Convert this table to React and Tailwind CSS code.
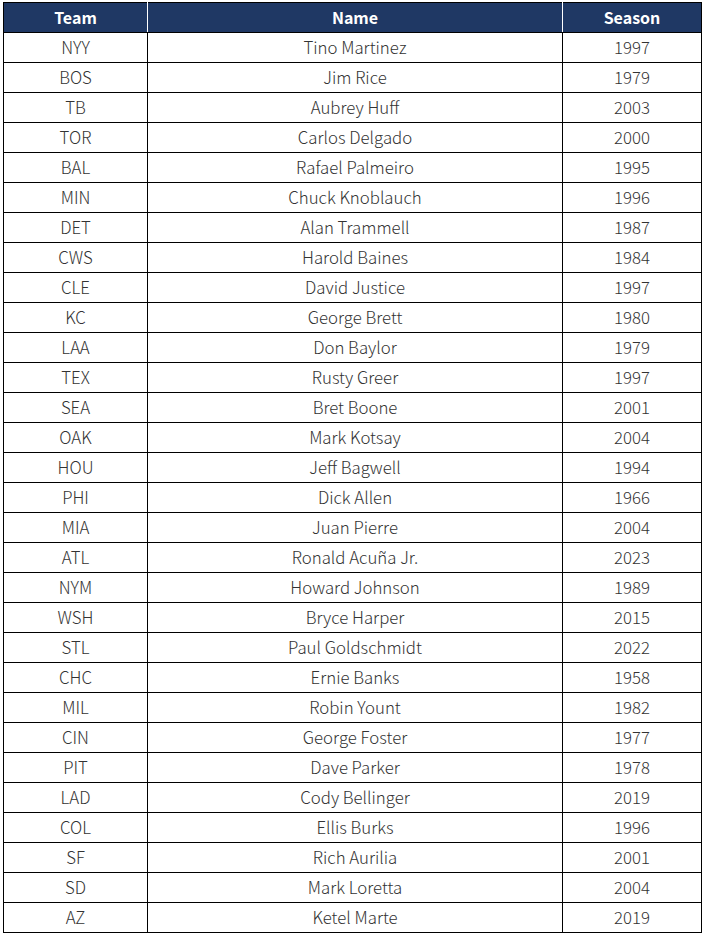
const rows = [
  ["NYY", "Tino Martinez", "1997"],
  ["BOS", "Jim Rice", "1979"],
  ["TB", "Aubrey Huff", "2003"],
  ["TOR", "Carlos Delgado", "2000"],
  ["BAL", "Rafael Palmeiro", "1995"],
  ["MIN", "Chuck Knoblauch", "1996"],
  ["DET", "Alan Trammell", "1987"],
  ["CWS", "Harold Baines", "1984"],
  ["CLE", "David Justice", "1997"],
  ["KC", "George Brett", "1980"],
  ["LAA", "Don Baylor", "1979"],
  ["TEX", "Rusty Greer", "1997"],
  ["SEA", "Bret Boone", "2001"],
  ["OAK", "Mark Kotsay", "2004"],
  ["HOU", "Jeff Bagwell", "1994"],
  ["PHI", "Dick Allen", "1966"],
  ["MIA", "Juan Pierre", "2004"],
  ["ATL", "Ronald Acuña Jr.", "2023"],
  ["NYM", "Howard Johnson", "1989"],
  ["WSH", "Bryce Harper", "2015"],
  ["STL", "Paul Goldschmidt", "2022"],
  ["CHC", "Ernie Banks", "1958"],
  ["MIL", "Robin Yount", "1982"],
  ["CIN", "George Foster", "1977"],
  ["PIT", "Dave Parker", "1978"],
  ["LAD", "Cody Bellinger", "2019"],
  ["COL", "Ellis Burks", "1996"],
  ["SF", "Rich Aurilia", "2001"],
  ["SD", "Mark Loretta", "2004"],
  ["AZ", "Ketel Marte", "2019"],
];

export default function App() {
  return (
    <div className="bg-white w-[704px] h-[935px] pt-[2px] pl-[3px]" style={{ fontFamily: '"Noto Sans CJK KR", "Noto Sans", sans-serif' }}>
      <table className="border-collapse w-[698px] table-fixed">
        <colgroup>
          <col className="w-[144px]" />
          <col className="w-[415px]" />
          <col className="w-[139px]" />
        </colgroup>
        <thead>
          <tr className="h-[30px] bg-[#1f3864] text-white text-[16px] font-bold">
            <th className="border border-black border-r-white p-0 pb-[2px] leading-none">Team</th>
            <th className="border border-black border-r-white p-0 pb-[2px] leading-none">Name</th>
            <th className="border border-black p-0 pb-[2px] leading-none">Season</th>
          </tr>
        </thead>
        <tbody>
          {rows.map((r) => (
            <tr key={r[0]} className="h-[30px] text-[16.8px] font-light text-[#333333]">
              <td className="border border-black p-0 pb-[1px] text-center leading-none">{r[0]}</td>
              <td className="border border-black p-0 pb-[1px] text-center leading-none">{r[1]}</td>
              <td className="border border-black p-0 pb-[1px] text-center leading-none">{r[2]}</td>
            </tr>
          ))}
        </tbody>
      </table>
    </div>
  );
}
